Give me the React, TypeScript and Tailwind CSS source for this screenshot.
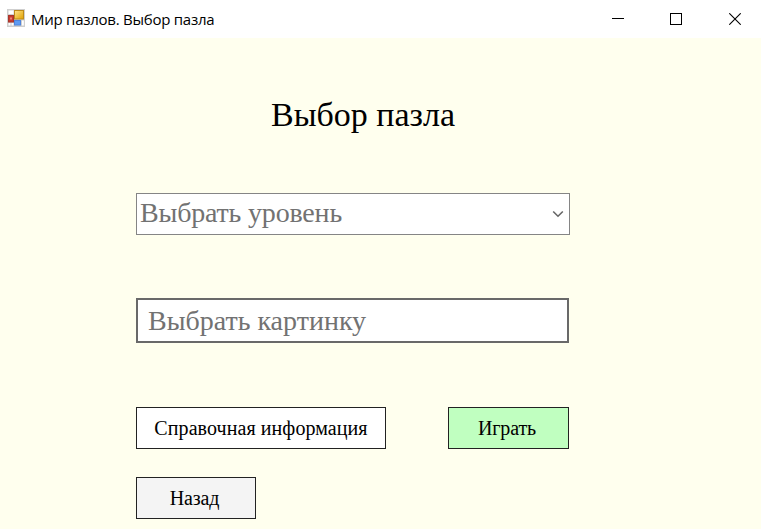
function AppIcon() {
  return (
    <svg width="18" height="18" viewBox="0 0 18 18" className="-mt-[2px] shrink-0" aria-hidden="true">
      <defs>
        <linearGradient id="gold" x1="0" y1="0" x2="1" y2="1">
          <stop offset="0" stopColor="#ffe58a" />
          <stop offset="1" stopColor="#e0a000" />
        </linearGradient>
      </defs>
      <rect width="18" height="18" fill="#cfcfcf" />
      <path d="M1.5 1.5h5v3.5h-5zM1.5 14h2v2.5h-2zM4.5 14h2v2.5h-2zM15 11.5h1.8v5h-1.8z" fill="#fff" />
      <rect x="7.5" y="1.5" width="9" height="8.5" fill="url(#gold)" stroke="#bd8a18" />
      <rect x="1.5" y="6.5" width="5" height="6.5" fill="#c83a2c" stroke="#a8352b" />
      <rect x="3" y="8.5" width="2" height="2" fill="#ee8274" />
      <rect x="7.5" y="11.5" width="6" height="4.5" fill="#5f9bf2" stroke="#4f84dc" />
    </svg>
  );
}

function TitleBar() {
  return (
    <header className="flex h-[38px] items-center bg-white pl-[7px]">
      <AppIcon />
      <h1 className="ml-[6px] flex-1 whitespace-nowrap pt-px font-['Open_Sans',sans-serif] text-[15px] tracking-[-0.25px] text-black">
        Мир пазлов. Выбор пазла
      </h1>
      <div className="flex text-black">
        <button aria-label="Свернуть" className="flex h-[38px] w-[58px] items-center justify-center">
          <svg width="12" height="12" shapeRendering="crispEdges"><path d="M0 5.5h12" stroke="currentColor" /></svg>
        </button>
        <button aria-label="Развернуть" className="flex h-[38px] w-[58px] items-center justify-center">
          <svg width="12" height="12" shapeRendering="crispEdges"><path d="M.5.5h11v11H.5z" fill="none" stroke="currentColor" /></svg>
        </button>
        <button aria-label="Закрыть" className="flex h-[38px] w-[56px] items-center justify-center pl-1">
          <svg width="12" height="12"><path d="M.3.3l11.4 11.4M11.7.3L.3 11.7" stroke="currentColor" strokeWidth="1.1" /></svg>
        </button>
      </div>
    </header>
  );
}

export default function App() {
  return (
    <div className="flex h-[529px] w-[761px] flex-col overflow-hidden bg-[#ffffee] font-['Liberation_Serif',serif] text-black">
      <TitleBar />
      <main className="flex flex-1 flex-col pl-[136px]">
        <h2 className="ml-[135px] mt-[57px] h-10 whitespace-nowrap text-[34px] leading-10">Выбор пазла</h2>
        <button className="mt-[58px] flex h-[42px] w-[434px] items-center justify-between border border-[#858585] bg-white pl-[3px] pr-[5px] text-[#727272]">
          <span className="whitespace-nowrap pb-[2px] text-[28px] leading-[38px] tracking-[-0.18px]">Выбрать уровень</span>
          <svg width="12" height="8" viewBox="0 0 12 8" className="-mt-px"><path d="M1.2 1.5L6 6.2l4.8-4.7" fill="none" stroke="#666" strokeWidth="1.6" /></svg>
        </button>
        <button className="mt-[63px] flex h-[45px] w-[433px] items-center border-2 border-[#696969] bg-white pl-[10px] text-[#727272]">
          <span className="whitespace-nowrap text-[28px] leading-[38px]">Выбрать картинку</span>
        </button>
        <div className="mt-16 flex w-[433px] justify-between text-[20px]">
          <button className="flex h-[42px] w-[250px] items-center justify-center whitespace-nowrap border border-[#222] bg-white tracking-[0.08px]">Справочная информация</button>
          <button className="flex h-[42px] w-[121px] items-center justify-center border border-[#222] bg-[#c0ffc0] pr-[3px] tracking-[-0.15px]">Играть</button>
        </div>
        <button className="mt-7 flex h-[42px] w-[120px] items-center justify-center border border-[#222] bg-[#f4f4f4] pr-[3px] text-[20px] tracking-[-0.2px]">Назад</button>
      </main>
    </div>
  );
}
